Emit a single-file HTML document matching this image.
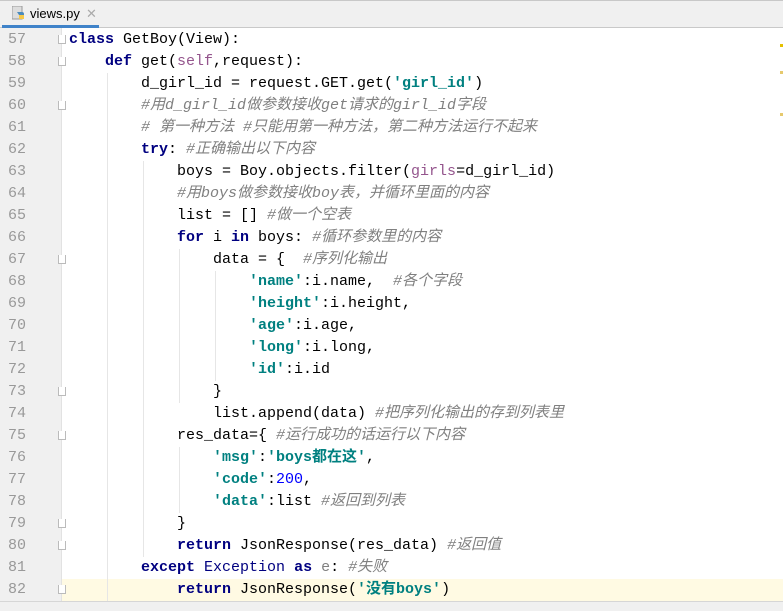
<!DOCTYPE html>
<html><head><meta charset="utf-8"><style>
*{margin:0;padding:0;box-sizing:border-box}
body{width:783px;height:611px;overflow:hidden;background:#fff;position:relative;font-family:"Liberation Mono","Noto Sans CJK SC",monospace;font-size:15px}
.tabbar{position:absolute;left:0;top:0;width:783px;height:28px;background:#f0f0f0;border-top:1px solid #c8c8c8;border-bottom:1px solid #c9c9c9}
.tab{position:absolute;left:2px;top:0;width:97px;height:27px;border-bottom:3px solid #4083c9;font-family:"Liberation Sans",sans-serif;font-size:13px;color:#000}
.tab span{position:absolute;left:28px;top:5px}
.tab .x{left:84px;color:#aaa}
.gutter{position:absolute;left:0;top:28px;width:62px;height:573px;background:#f0f0f0;border-right:1px solid #e2e2e2}
.ln{position:absolute;left:8px;color:#999;font-size:15px;line-height:22px}
.line{position:absolute;left:0;height:22px;line-height:22px;white-space:pre;color:#000}
.cur{position:absolute;left:62px;top:579px;width:721px;height:22px;background:#fffae3}
.k{color:#000080;font-weight:bold}
.s{color:#008080;font-weight:bold}
.c{color:#808080;font-style:italic}
.n{color:#0000ff}
.p{color:#94558d}
.g{position:absolute;width:1px;background:#e6e6e6}
.fold{position:absolute;left:58px;width:8px;height:9px;border:1px solid #bbb;border-top:none;background:#fff}
.bot{position:absolute;left:0;top:601px;width:783px;height:10px;background:#f0f0f0;border-top:1px solid #d6d6d6}
.mk{position:absolute;left:780px;width:3px;height:3px;background:#e6c96d}
</style></head><body>
<div class="tabbar"><div class="tab">
<svg style="position:absolute;left:10px;top:5px" width="14" height="14" viewBox="0 0 14 14"><rect x="0" y="0" width="10" height="13" fill="#ddd" stroke="#999"/><path d="M5 6h5a2 2 0 0 1 2 2v3H7v-2" fill="#4b8bbe"/><path d="M7 9h5v4H7z" fill="#f7c948"/></svg>
<span>views.py</span><span class="x">✕</span></div></div>
<div class="gutter"></div>
<div class="cur"></div>
<div class="g" style="left:107px;top:73px;height:528px"></div>
<div class="g" style="left:143px;top:161px;height:396px"></div>
<div class="g" style="left:179px;top:249px;height:154px"></div>
<div class="g" style="left:215px;top:271px;height:110px"></div>
<div class="g" style="left:179px;top:447px;height:66px"></div>
<div id="c"></div>
<div class="fold" style="top:35px"></div><div class="fold" style="top:57px"></div><div class="fold" style="top:101px"></div><div class="fold" style="top:255px"></div><div class="fold" style="top:387px"></div><div class="fold" style="top:431px"></div><div class="fold" style="top:519px"></div><div class="fold" style="top:541px"></div><div class="fold" style="top:585px"></div>
<div class="mk" style="top:44px;background:#e5c000"></div><div class="mk" style="top:71px"></div><div class="mk" style="top:113px"></div>
<div class="bot"></div>
<script>
const L=[
[0,'<span class="k">class</span> GetBoy(View):'],
[1,'<span class="k">def</span> get(<span class="p">self</span>,request):'],
[2,'d_girl_id = request.GET.get(<span class="s">\'girl_id\'</span>)'],
[2,'<span class="c">#用d_girl_id做参数接收get请求的girl_id字段</span>'],
[2,'<span class="c"># 第一种方法 #只能用第一种方法，第二种方法运行不起来</span>'],
[2,'<span class="k">try</span>: <span class="c">#正确输出以下内容</span>'],
[3,'boys = Boy.objects.filter(<span class="p">girls</span>=d_girl_id)'],
[3,'<span class="c">#用boys做参数接收boy表，并循环里面的内容</span>'],
[3,'list = [] <span class="c">#做一个空表</span>'],
[3,'<span class="k">for</span> i <span class="k">in</span> boys: <span class="c">#循环参数里的内容</span>'],
[4,'data = {  <span class="c">#序列化输出</span>'],
[5,'<span class="s">\'name\'</span>:i.name,  <span class="c">#各个字段</span>'],
[5,'<span class="s">\'height\'</span>:i.height,'],
[5,'<span class="s">\'age\'</span>:i.age,'],
[5,'<span class="s">\'long\'</span>:i.long,'],
[5,'<span class="s">\'id\'</span>:i.id'],
[4,'}'],
[4,'list.append(data) <span class="c">#把序列化输出的存到列表里</span>'],
[3,'res_data={ <span class="c">#运行成功的话运行以下内容</span>'],
[4,'<span class="s">\'msg\'</span>:<span class="s">\'boys都在这\'</span>,'],
[4,'<span class="s">\'code\'</span>:<span class="n">200</span>,'],
[4,'<span class="s">\'data\'</span>:list <span class="c">#返回到列表</span>'],
[3,'}'],
[3,'<span class="k">return</span> JsonResponse(res_data) <span class="c">#返回值</span>'],
[2,'<span class="k">except</span> <span style="color:#000080">Exception</span> <span class="k">as</span> <span style="color:#808080">e</span>: <span class="c">#失败</span>'],
[3,'<span class="k">return</span> JsonResponse(<span class="s">\'没有boys\'</span>)']];
let h='';L.forEach((l,i)=>{const t=29+i*22;h+=`<div class="ln" style="top:${t}px">${57+i}</div><div class="line" style="top:${t}px;left:${69+36*l[0]}px">${l[1]}</div>`});
document.getElementById('c').innerHTML=h;
</script>
</body></html>
